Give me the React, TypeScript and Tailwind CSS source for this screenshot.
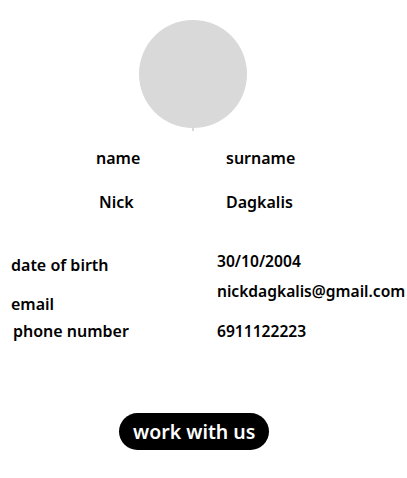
export default function App() {
  return (
    <div className="relative w-[407px] h-[478px] bg-white text-black font-['Noto_Sans',sans-serif] font-semibold">
      <div className="flex pt-[20px] pl-[139px]">
        <div className="relative w-[108px] h-[108px] rounded-full bg-[#d9d9d9]">
          <div className="absolute left-1/2 -translate-x-1/2 -bottom-[3px] w-[2px] h-[4px] bg-[#d9d9d9]" />
        </div>
      </div>

      <div className="grid grid-cols-[226px_1fr] mt-[20px] text-[16px] leading-[20px]">
        <div className="pl-[96px]">name</div>
        <div>surname</div>
        <div className="pl-[99px] mt-[24px]">Nick</div>
        <div className="mt-[24px]">Dagkalis</div>
      </div>

      <div className="flex mt-[39px] text-[16px] leading-[20px]">
        <div className="w-[217px] shrink-0 pl-[11px] flex flex-col">
          <span className="mt-[4px]">date of birth</span>
          <span className="mt-[19px]">email</span>
          <span className="mt-[7px] pl-[2px]">phone number</span>
        </div>
        <div className="flex flex-col whitespace-nowrap text-[15.6px]">
          <span>30/10/2004</span>
          <span className="mt-[10px]">nickdagkalis@gmail.com</span>
          <span className="mt-[20px]">6911122223</span>
        </div>
      </div>

      <div className="flex pl-[119px] mt-[72px]">
        <button className="h-[37px] px-[14px] rounded-full bg-black text-white text-[19.5px] leading-none">
          work with us
        </button>
      </div>
    </div>
  );
}
